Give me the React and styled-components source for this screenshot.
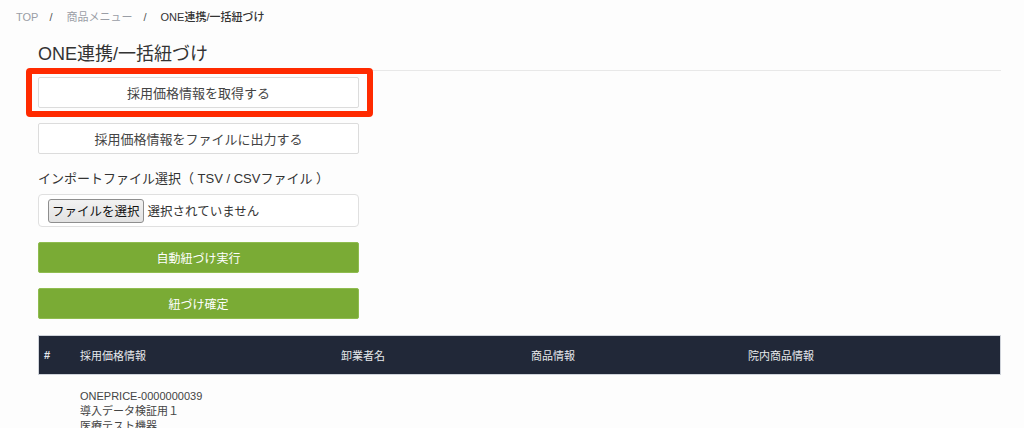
import React from "react";
import styled, { createGlobalStyle } from "styled-components";

const GlobalStyle = createGlobalStyle`
  html, body { margin: 0; padding: 0; background: #fdfdfd; }
  body {
    font-family: "Liberation Sans", "Noto Sans CJK JP", sans-serif;
    color: #333;
  }
  * { box-sizing: border-box; }
`;

const Page = styled.div`
  width: 1024px;
  height: 428px;
  overflow: hidden;
  padding: 10px 23px 0 16px;
`;

const Breadcrumb = styled.nav`
  display: flex;
  align-items: center;
  height: 14px;
  font-size: 11px;
  line-height: 14px;
`;

const Crumb = styled.span`
  color: ${(p) => (p.$current ? "#333" : "#9a9ea6")};
  font-weight: ${(p) => (p.$current ? 500 : 400)};
`;

const Sep = styled.span`
  color: #555;
  margin: 0 14px 0 11px;
`;

const Content = styled.main`
  padding-left: 22px;
`;

const Title = styled.h1`
  margin: 18px 0 0;
  font-size: 18px;
  font-weight: 400;
  line-height: 24px;
  color: #333;
  padding-bottom: 4px;
  border-bottom: 1px solid #e8e8e8;
`;

const Stack = styled.div`
  width: 321px;
  display: flex;
  flex-direction: column;
`;

const ButtonWrap = styled.div`
  position: relative;
  margin-top: ${(p) => p.$mt || 0}px;
`;

const Highlight = styled.div`
  position: absolute;
  left: -12px;
  right: -14px;
  top: -9px;
  bottom: -9px;
  border: 6px solid #ff2a00;
  border-radius: 4px;
  pointer-events: none;
`;

const Button = styled.button`
  display: block;
  width: 100%;
  height: 31px;
  font-family: inherit;
  font-size: ${(p) => (p.$primary ? "12px" : "13px")};
  color: ${(p) => (p.$primary ? "#fff" : "#444")};
  background: ${(p) => (p.$primary ? "#7aab35" : "#fff")};
  border: 1px solid ${(p) => (p.$primary ? "#8fbc4f" : "#dcdcdc")};
  border-radius: 2px;
  padding: 0;
  cursor: pointer;
`;

const Label = styled.div`
  margin-top: 16px;
  font-size: 13px;
  line-height: 18px;
  color: #333;
`;

const FileBox = styled.div`
  margin-top: 6px;
  height: 33px;
  border: 1px solid #e0e0e0;
  border-radius: 4px;
  display: flex;
  align-items: center;
  padding-left: 9px;
  gap: 4px;
  background: #fff;
`;

const FileButton = styled.button`
  height: 24px;
  padding: 0 3px;
  font-family: inherit;
  font-size: 12.5px;
  color: #111;
  background: linear-gradient(#f2f2f2, #e2e2e2);
  border: 1px solid #8e8e8e;
  border-radius: 3px;
`;

const FileStatus = styled.span`
  font-size: 12.5px;
  color: #333;
`;

const Table = styled.div`
  margin-top: 16px;
  width: 963px;
`;

const Row = styled.div`
  display: grid;
  grid-template-columns: 36px 261px 190px 217px 259px;
`;

const HeadRow = styled(Row)`
  height: 40px;
  align-items: center;
  background: #212838;
  border: 1px solid #cfd3da;
`;

const HeadCell = styled.div`
  padding-left: 5px;
  font-size: 11px;
  color: #e6e8ec;
  font-weight: ${(p) => (p.$bold ? 700 : 400)};
`;

const BodyCell = styled.div`
  padding: 14px 0 0 6px;
  font-size: 11px;
  line-height: 15px;
  color: #444;
`;

export default function App() {
  return (
    <>
      <GlobalStyle />
      <Page>
        <Breadcrumb>
          <Crumb>TOP</Crumb>
          <Sep>/</Sep>
          <Crumb>商品メニュー</Crumb>
          <Sep>/</Sep>
          <Crumb $current>ONE連携/一括紐づけ</Crumb>
        </Breadcrumb>
        <Content>
          <Title>ONE連携/一括紐づけ</Title>
          <Stack>
            <ButtonWrap $mt={6}>
              <Button>採用価格情報を取得する</Button>
              <Highlight />
            </ButtonWrap>
            <ButtonWrap $mt={15}>
              <Button>採用価格情報をファイルに出力する</Button>
            </ButtonWrap>
            <Label>インポートファイル選択（ TSV / CSVファイル ）</Label>
            <FileBox>
              <FileButton>ファイルを選択</FileButton>
              <FileStatus>選択されていません</FileStatus>
            </FileBox>
            <ButtonWrap $mt={15}>
              <Button $primary>自動紐づけ実行</Button>
            </ButtonWrap>
            <ButtonWrap $mt={15}>
              <Button $primary>紐づけ確定</Button>
            </ButtonWrap>
          </Stack>
          <Table>
            <HeadRow>
              <HeadCell $bold>#</HeadCell>
              <HeadCell>採用価格情報</HeadCell>
              <HeadCell>卸業者名</HeadCell>
              <HeadCell>商品情報</HeadCell>
              <HeadCell>院内商品情報</HeadCell>
            </HeadRow>
            <Row>
              <BodyCell />
              <BodyCell>
                ONEPRICE-0000000039
                <br />
                導入データ検証用１
                <br />
                医療テスト機器
              </BodyCell>
              <BodyCell />
              <BodyCell />
              <BodyCell />
            </Row>
          </Table>
        </Content>
      </Page>
    </>
  );
}
